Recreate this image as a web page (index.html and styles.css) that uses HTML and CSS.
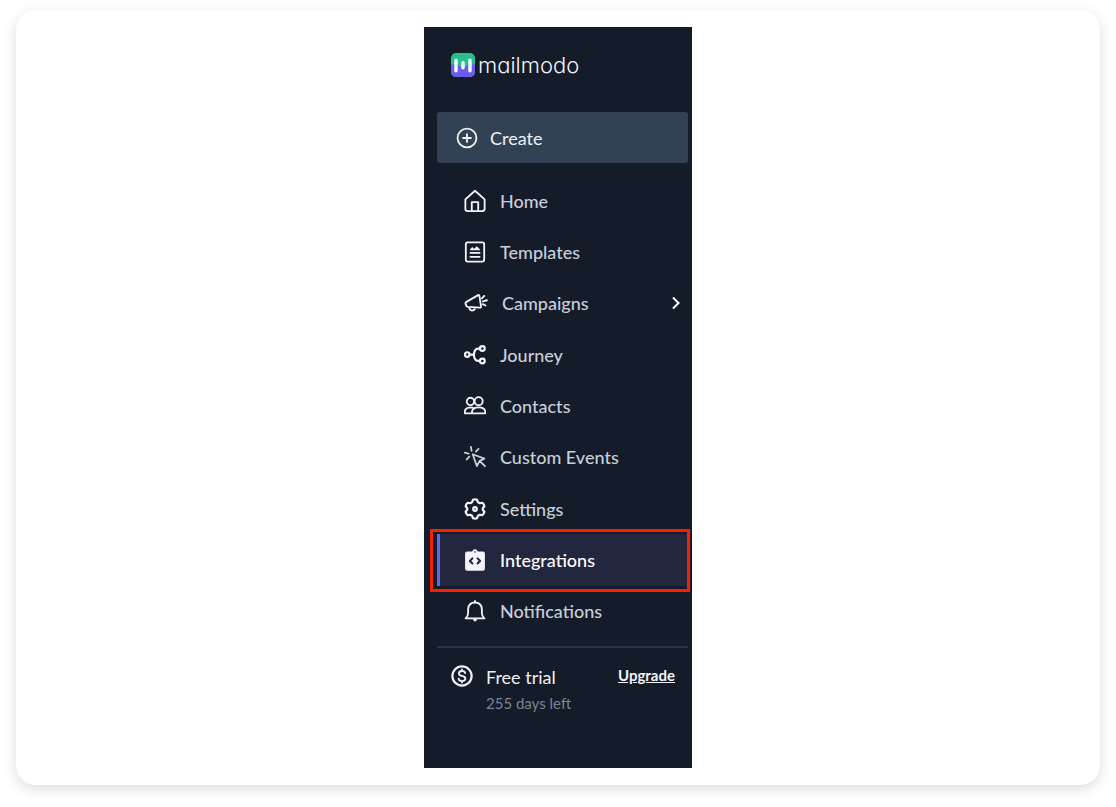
FILE: index.html
```html
<!DOCTYPE html>
<html lang="en">
<head>
<meta charset="utf-8">
<title>Mailmodo</title>
<link rel="stylesheet" href="styles.css">
</head>
<body>
<main class="card">
  <aside class="sidebar">
    <a class="brand" href="#">
      <svg class="brand-mark" viewBox="0 0 24 24" aria-hidden="true">
        <defs><clipPath id="mark"><rect width="24" height="24" rx="5"/></clipPath></defs>
        <g clip-path="url(#mark)">
          <rect width="24" height="24" fill="#27bf8b"/>
          <path d="M0 11.500H7L12 16L17 11.500H24V24H0Z" fill="#6a5cf0"/>
        </g>
        <path d="M5 7.200V17.800M12 9.800V14.800M19 7.200V17.800" stroke="#fff" stroke-width="3.400" stroke-linecap="round"/>
      </svg>
      <span class="brand-name">mailmodo</span>
    </a>
    <button class="create" type="button">
      <svg class="icon" viewBox="0 0 24 24" aria-hidden="true"><circle cx="12" cy="12" r="10.300"/><path d="M12 7.700V16.300M7.700 12H16.300"/></svg>
      Create
    </button>
    <nav class="nav">
      <a class="item" href="#">
        <svg class="icon" viewBox="0 0 24 24" aria-hidden="true"><path d="M1.500 10.200L12 .8L22.500 10.200V20.500Q22.500 23 20 23H4Q1.500 23 1.500 20.500Z"/><path d="M8.500 22.500V13.200H15.500V22.500"/></svg>
        Home
      </a>
      <a class="item" href="#">
        <svg class="icon" viewBox="0 0 24 24" aria-hidden="true"><rect x="2" y="1.500" width="20" height="21" rx="2"/><path d="M7 13H17M7 17.300H17"/><path d="M6.500 10.200V9.200L9 6.500L11 8.500L14 5.800L17.500 9.200V10.200Z" fill="currentColor" stroke="none"/></svg>
        Templates
      </a>
      <a class="item" href="#">
        <svg class="icon icon-wide" viewBox="0 0 26 24" aria-hidden="true"><path d="M2.500 10.800L15.300 3.400Q16.400 3 16.700 4.200L18.500 15.800Q18.600 17.200 17.200 17.100L4 16.300Q2.900 16.200 2.500 15L1.500 12.800Q1.300 11.500 2.500 10.800ZM5.600 16.600Q5.800 20 8.800 20.300Q11.900 20.200 12 17"/><path d="M19.500 7L22 4.300M20.500 10.200L25 9M20.500 13.300L23.300 14.700"/></svg>
        Campaigns
        <svg class="chevron" viewBox="0 0 10 14" aria-hidden="true"><path d="M2 1.500L7.500 7L2 12.500"/></svg>
      </a>
      <a class="item" href="#">
        <svg class="icon icon-bold" viewBox="0 0 24 24" aria-hidden="true"><circle cx="3.500" cy="11.500" r="2.500"/><circle cx="20" cy="5" r="2.600"/><circle cx="20" cy="18.500" r="2.600"/><path d="M6 11.500H10M17.400 5H15.500Q12.500 5 11.300 8.500Q10.300 11.500 11.300 15Q12.500 18.500 15.500 18.500H17.400"/></svg>
        Journey
      </a>
      <a class="item" href="#">
        <svg class="icon" viewBox="0 0 24 24" aria-hidden="true"><circle cx="7" cy="7" r="4"/><circle cx="16" cy="6.800" r="4.400"/><path d="M8.700 20V18.300Q9.200 13.500 16 13.500Q22.800 13.500 23.200 18.300V20ZM8.500 20H.9V18Q1.200 13.800 7 13.500L9.500 13.800"/></svg>
        Contacts
      </a>
      <a class="item item-soft" href="#">
        <svg class="icon" viewBox="0 0 24 24" aria-hidden="true"><path d="M9.500 9L22.300 13.700L17 16.200L14 21.800ZM17 16.200L22.800 22"/><path d="M7.500 1L8.300 5.300M.9 7.200L5 8.200M15.800 3.200L13 6.200M5.800 11.700L3 14.700"/></svg>
        Custom Events
      </a>
      <a class="item" href="#">
        <svg class="icon icon-bold" viewBox="0 0 24 24" aria-hidden="true"><path d="M9.800 2Q12 1.200 14.200 2L15.200 4.600L17.300 5.700L20 5.200Q21.800 6.700 22.200 9L20.500 11.200V12.800L22.200 15Q21.800 17.300 20 18.800L17.300 18.300L15.200 19.400L14.200 22Q12 22.800 9.800 22L8.800 19.400L6.700 18.300L4 18.800Q2.200 17.300 1.800 15L3.500 12.800V11.200L1.800 9Q2.200 6.700 4 5.200L6.700 5.700L8.800 4.600Z"/><circle cx="12" cy="12" r="2"/></svg>
        Settings
      </a>
      <a class="item item-active" href="#" aria-current="page">
        <svg class="icon" viewBox="0 0 24 24" aria-hidden="true"><path d="M3.500 2.700H9Q9.600 .2 12 .2Q14.400 .2 15 2.700H20.500Q22.800 2.700 22.800 5V21.500Q22.800 23.800 20.500 23.800H3.500Q1.200 23.800 1.200 21.500V5Q1.200 2.700 3.500 2.700Z" fill="#f5f3ff" stroke="none"/><circle cx="12" cy="3.300" r=".9" fill="#22263f" stroke="none"/><path d="M9.200 10.200L6.400 13L9.200 15.800M14.800 10.200L17.600 13L14.800 15.800" stroke="#22263f" stroke-width="2.200"/></svg>
        Integrations
      </a>
      <a class="item" href="#">
        <svg class="icon" viewBox="0 0 24 24" aria-hidden="true"><path d="M1.700 20H22.300Q19.500 17.500 19.500 14.500V10Q19 2.700 12 2.700Q5 2.700 4.500 10V14.500Q4.500 17.500 1.700 20ZM12 1V2.500"/><path d="M9.800 20.500H14.200Q13.800 23.500 12 23.500Q10.200 23.500 9.800 20.500Z" fill="currentColor" stroke="none"/></svg>
        Notifications
      </a>
    </nav>
    <section class="plan">
      <svg class="icon icon-bold" viewBox="0 0 24 24" aria-hidden="true"><circle cx="12" cy="12" r="10.500"/><path d="M15.500 8.800Q15.200 6.500 12 6.500Q8.600 6.500 8.600 9.200Q8.600 11.300 12 11.900Q15.700 12.600 15.700 14.800Q15.700 17.500 12 17.500Q8.700 17.500 8.300 15M12 4.800V6.500M12 17.500V19.200" stroke-width="2"/></svg>
      <div class="plan-text">
        <span class="plan-name">Free trial</span>
        <span class="plan-left">255 days left</span>
      </div>
      <a class="upgrade" href="#">Upgrade</a>
    </section>
  </aside>
</main>
</body>
</html>
```
FILE: styles.css
```css
* {
  box-sizing: border-box;
}

body {
  margin: 0;
  min-height: 100vh;
  padding: 10px 16px 22px;
  display: flex;
  background: #fff;
  font-family: Lato, "Liberation Sans", sans-serif;
  font-size: 18px;
  line-height: 24px;
}

a {
  color: inherit;
  text-decoration: none;
}

.card {
  flex: 1;
  display: flex;
  justify-content: center;
  padding: 17px;
  border-radius: 20px;
  background: #fff;
  box-shadow: 0 4px 14px rgba(0, 0, 0, 0.14);
}

.sidebar {
  display: flex;
  flex-direction: column;
  width: 268px;
  padding: 24px 4px 53px 13px;
  background: #151c29;
  color: #c9cedb;
}

.brand {
  display: flex;
  align-items: center;
  gap: 3px;
  height: 28px;
  margin-bottom: 33px;
  padding-left: 14px;
}

.brand-mark {
  width: 24px;
  height: 24px;
}

.brand-name {
  color: #f1f3f7;
  font-family: Inter, sans-serif;
  font-size: 22px;
  font-weight: 300;
  font-feature-settings: "cv11";
}

.icon {
  flex: none;
  width: 22px;
  height: 22px;
  fill: none;
  stroke: currentColor;
  stroke-width: 2;
  stroke-linecap: round;
  stroke-linejoin: round;
}

.icon-wide {
  width: 24px;
}

.icon-bold {
  stroke-width: 2.4;
}

.create {
  display: flex;
  align-items: center;
  gap: 12px;
  height: 51px;
  padding: 0 19px;
  border: 0;
  border-radius: 3px;
  background: #334155;
  color: #eef1f6;
  font: inherit;
}

.nav {
  flex: 1;
  display: grid;
  grid-auto-rows: 1fr;
  margin: 12px 0 9px;
}

.item {
  position: relative;
  display: flex;
  align-items: center;
  gap: 14px;
  padding: 0 7px 0 27px;
  font-weight: 500;
}

.item .icon {
  color: #f1f3f8;
}

.item-soft .icon {
  color: #c9cedb;
}

.chevron {
  width: 10px;
  height: 14px;
  margin-left: auto;
  fill: none;
  stroke: #fff;
  stroke-width: 2;
}

.item-active {
  background: #22263f;
  box-shadow: inset 3px 0 #6366f1;
  color: #fff;
}

.item-active::after {
  content: "";
  position: absolute;
  inset: -5px -2px -6px -7px;
  border: 3px solid #f81f05;
}

.plan {
  display: flex;
  align-items: flex-start;
  gap: 13px;
  padding: 17px 13px 0 14px;
  border-top: 2px solid #29353f;
}

.plan-text {
  display: flex;
  flex: 1;
  flex-direction: column;
  gap: 2px;
}

.plan-name {
  color: #eef1f6;
}

.plan-left {
  color: #7b8494;
  font-size: 15px;
}

.plan .icon {
  color: #eef1f6;
}

.upgrade {
  color: #f1f3f7;
  font-size: 15px;
  font-weight: 700;
  line-height: 20px;
  text-decoration: underline;
}
```
